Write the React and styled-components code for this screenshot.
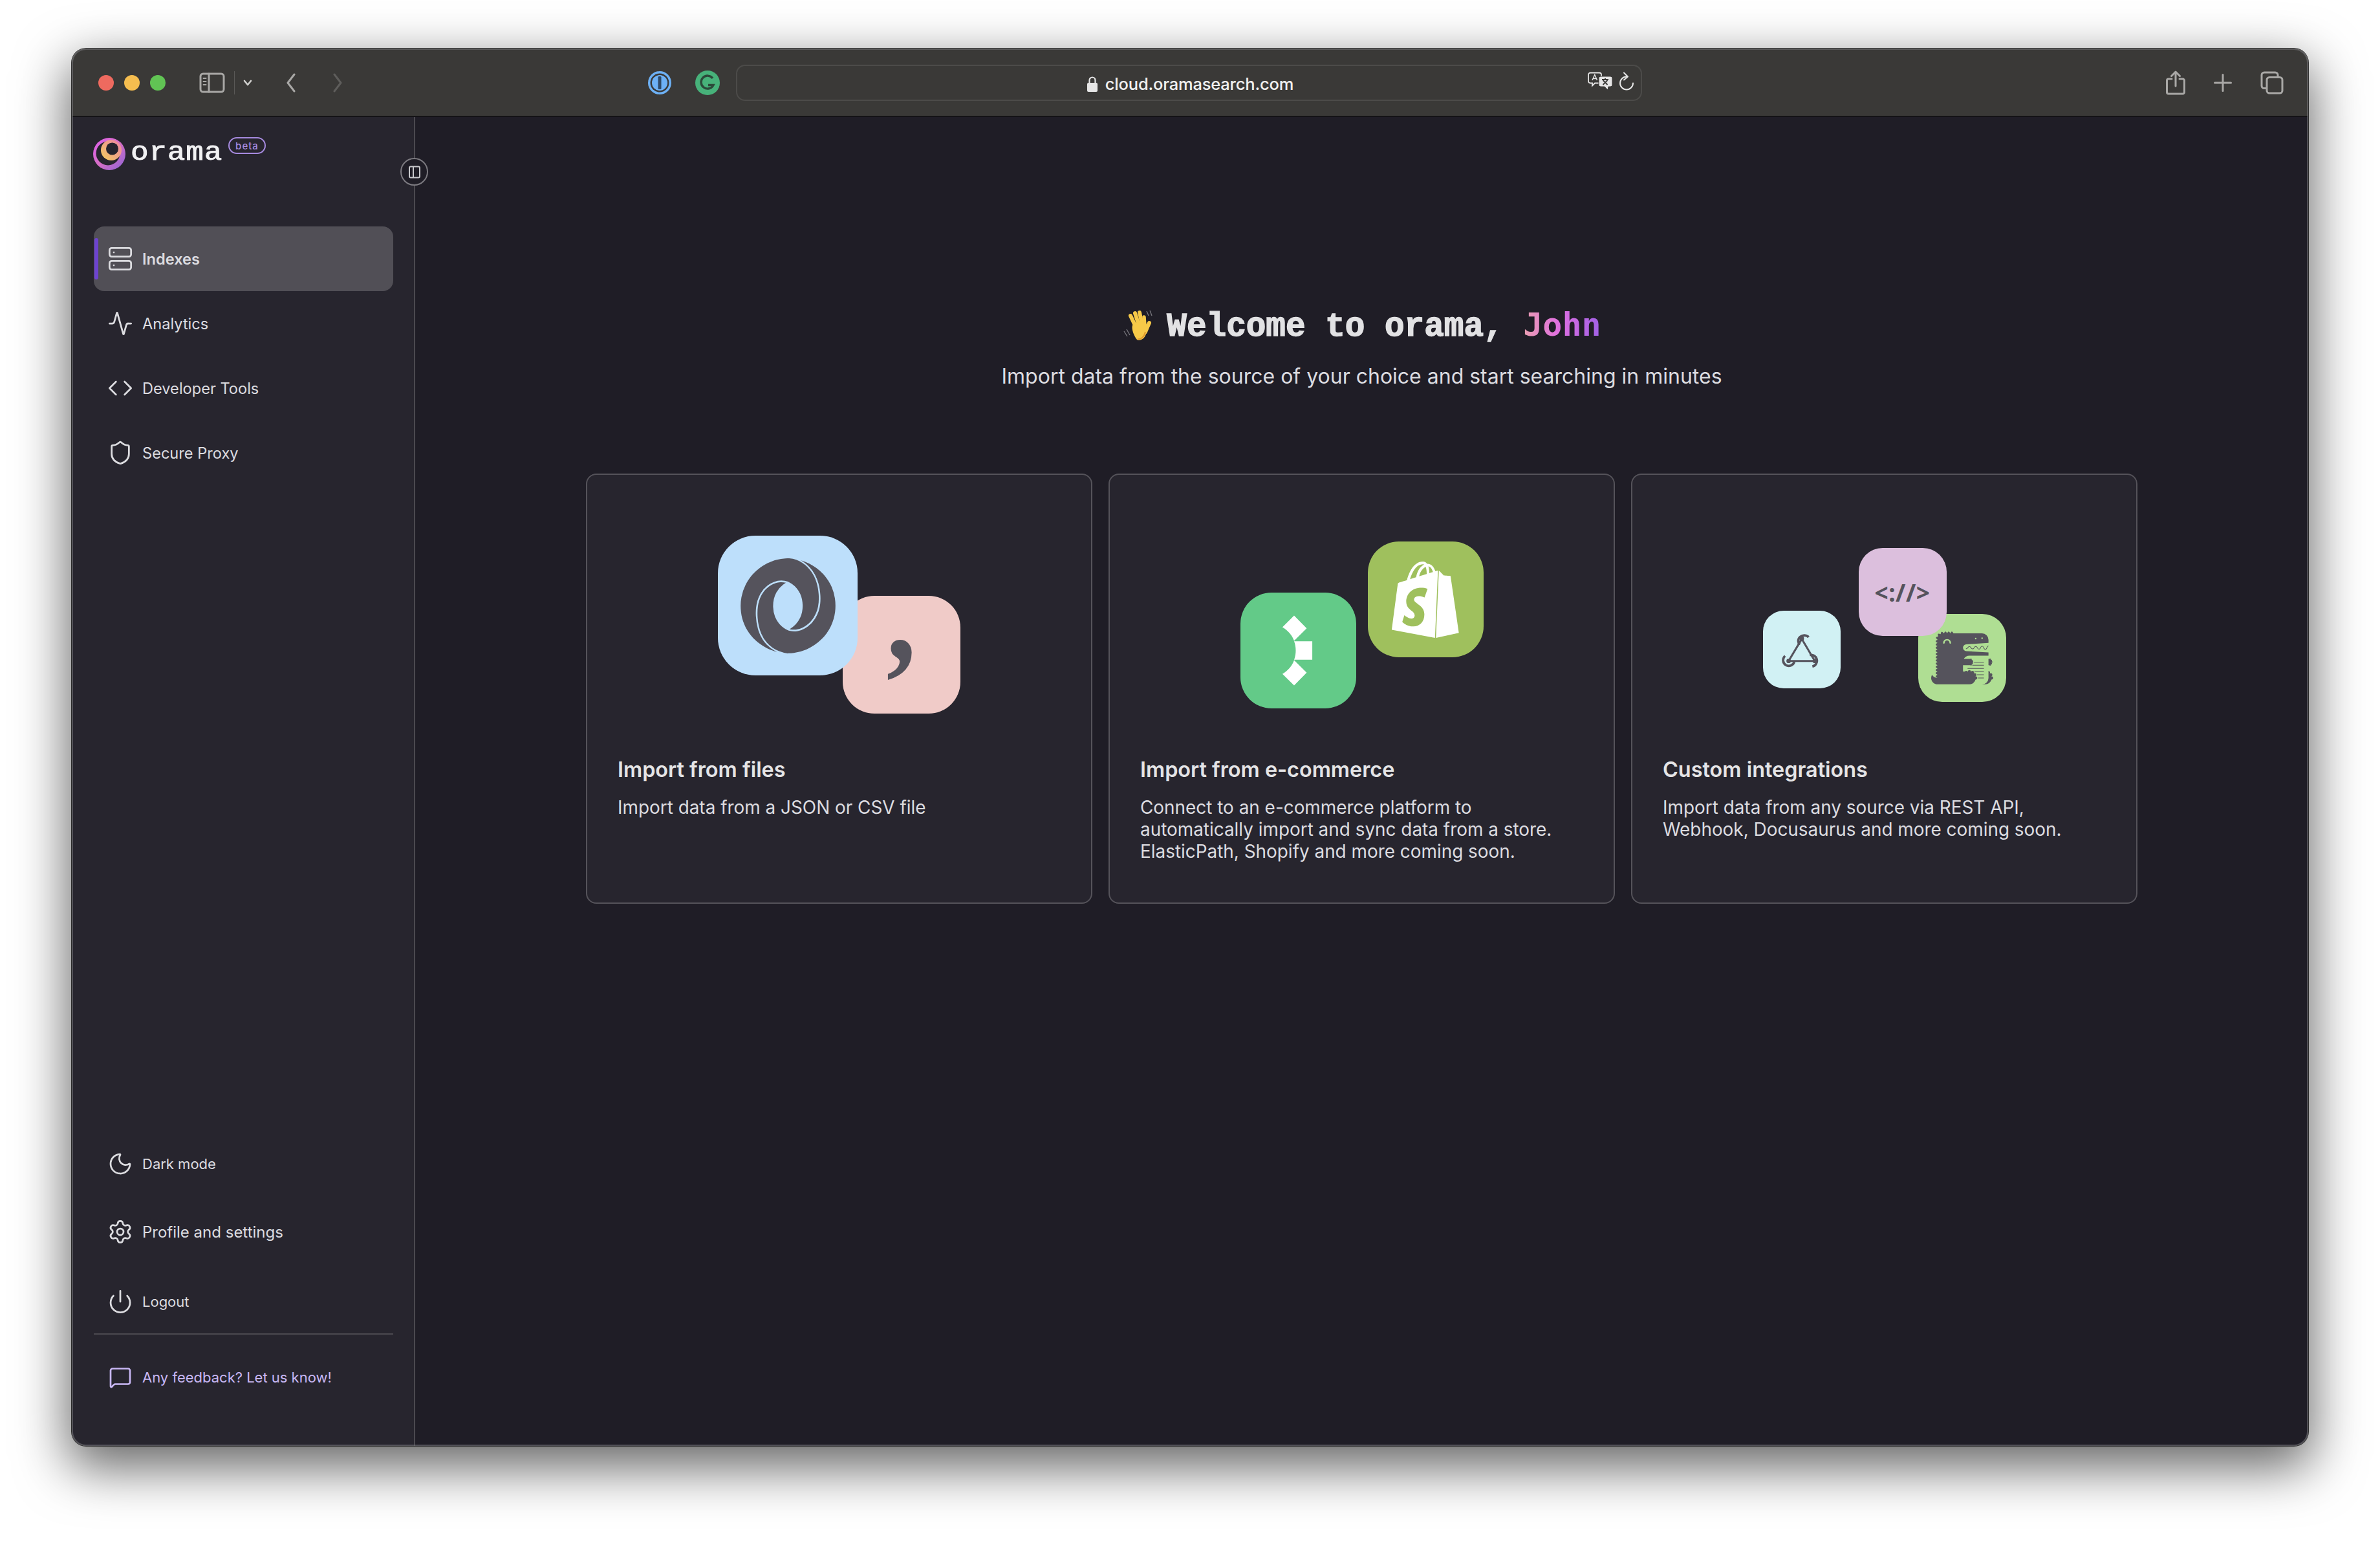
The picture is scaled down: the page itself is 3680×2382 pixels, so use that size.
import React from "react";
import styled, { createGlobalStyle } from "styled-components";
import { Server, Activity, Code, Shield, Moon, Settings, Power, MessageSquare } from "lucide-react";
import { SiJson, SiShopify, SiDocusaurus } from "react-icons/si";

const Global = createGlobalStyle`
  html, body { margin: 0; padding: 0; background: #fff; }
  * { box-sizing: border-box; }
  body { font-family: Inter, "Liberation Sans", sans-serif; }
`;

const Page = styled.div`
  width: 3680px; height: 2382px; padding: 75px 0 0 111px; overflow: hidden; background: #fff;
`;
const Win = styled.div`
  width: 3458px; height: 2160px; border-radius: 22px; overflow: hidden; display: flex; flex-direction: column;
  box-shadow: 0 28px 80px 6px rgba(0,0,0,.6), 0 0 0 1px rgba(0,0,0,.75);
  position: relative;
  &::after { content: ""; position: absolute; inset: 0; border-radius: 22px; pointer-events: none; box-shadow: inset 0 0 0 2px rgba(120,120,124,.55); }
`;
const TitleBar = styled.header`
  height: 106px; flex: none; background: #3a3937; border-bottom: 2px solid #141316; position: relative;
  display: flex; align-items: center; padding: 2px 0 0 41px;
`;
const Lights = styled.div`display: flex; gap: 16px; margin-right: 52px;`;
const Light = styled.span`width: 24px; height: 24px; border-radius: 50%; background: ${p => p.$c};`;
const BarIcon = styled.svg`flex: none; display: block; margin-left: ${p => p.$ml || 0}px;`;
const Divider = styled.span`width: 1px; height: 36px; background: #5a5957; margin-left: 14px;`;
const UrlBar = styled.div`
  width: 1401px; height: 56px; margin-left: 25px; border: 2px solid #4c4b49; border-radius: 14px; position: relative;
  display: flex; align-items: center; justify-content: center; gap: 11px;
  padding: 3px 0 0 3px; color: #f0f0f0; font-size: 25.5px; font-weight: 500; letter-spacing: -.2px;
`;
const UrlTools = styled.div`position: absolute; right: 10px; top: 9px; display: flex; align-items: center; gap: 8px;`;
const RightTools = styled.div`margin-left: auto; display: flex; align-items: center; gap: 44px; padding-right: 38px;`;

const Body = styled.div`flex: 1; display: flex; min-height: 0;`;
const Sidebar = styled.aside`
  width: 531px; flex: none; background: #27252e; border-right: 2px solid #4b4950; position: relative;
  display: flex; flex-direction: column; padding: 31px 32px 40px 34px;
`;
const LogoRow = styled.div`display: flex; align-items: flex-start; height: 138px; gap: 8px; margin-left: -1px;`;
const LogoText = styled.span`
  font-family: "Liberation Mono", monospace; font-size: 40px; letter-spacing: .7px; font-weight: 400; color: #f1f1f3;
  line-height: 44px; margin-top: 3px; width: 143px; display: block; transform: scaleX(1.15); transform-origin: left center;
  -webkit-text-stroke: .9px #f1f1f3;
`;
const Beta = styled.span`
  width: 58px; height: 26px; border: 2px solid #a78be0; border-radius: 13px; color: #a78be0; font-size: 15px; font-weight: 500;
  display: flex; align-items: center; justify-content: center; letter-spacing: 1px;
`;
const Collapse = styled.button`
  position: absolute; right: -22px; top: 63px; width: 43px; height: 43px; border-radius: 50%; padding: 0;
  background: #1f1d26; border: 2px solid #7c7a80; display: flex; align-items: center; justify-content: center;
`;
const Nav = styled.nav`display: flex; flex-direction: column;`;
const NavItem = styled.a`
  height: 100px; border-radius: 16px; display: flex; align-items: center; gap: 14px; padding-left: 21px; position: relative;
  font-size: 23.6px; color: #dcdce0; font-weight: ${p => p.$active ? 600 : 400};
  background: ${p => p.$active ? "#514f56" : "transparent"};
  &::before { content: ""; display: ${p => p.$active ? "block" : "none"}; position: absolute; left: 1px; top: 18px; bottom: 18px; width: 6px; border-radius: 3px; background: #6d43d0; }
`;
const Foot = styled.div`margin-top: auto; display: flex; flex-direction: column;`;
const FootItem = styled.a`
  height: ${p => p.$h}px; display: flex; align-items: center; gap: 14px; padding-left: 21px; color: #dcdce0; font-size: ${p => p.$fs}px;
`;
const FootRule = styled.div`height: 2px; background: #4b4950; flex: none;`;
const Feedback = styled.a`
  height: 132px; display: flex; align-items: center; gap: 16px; padding-left: 23px; color: #c9b8f5; font-size: 22px;
`;

const Main = styled.main`
  flex: 1; background: #1f1d26; display: flex; flex-direction: column; align-items: center; padding-top: 292px;
`;
const Heading = styled.h1`
  margin: 0; display: flex; align-items: center; gap: 21px; height: 60px;
  font-family: "Liberation Mono", monospace; font-size: 51px; font-weight: 700; color: #e2e2e4; white-space: pre;
  -webkit-text-stroke: 1.4px #e2e2e4;
`;
const Name = styled.span`
  font-family: "DejaVu Sans Mono", monospace; font-size: 50px; -webkit-text-stroke: 0;
  background: linear-gradient(90deg, #ea9fb0 0%, #e06fe0 45%, #9f60e6 100%);
  -webkit-background-clip: text; background-clip: text; color: transparent;
`;
const Sub = styled.p`
  margin: 29px 0 0; font-size: 32px; line-height: 40px; color: #dcdce0; font-weight: 400;
`;
const Cards = styled.section`display: grid; grid-template-columns: repeat(3, 783px); gap: 25px; margin-top: 130px;`;
const Card = styled.article`
  height: 665px; background: #27252e; border: 2px solid #55535a; border-radius: 16px; padding: 0 47px;
`;
const IconArea = styled.div`height: 434px; padding-top: ${p => p.$top}px; display: flex; justify-content: center;`;
const Cluster = styled.div`position: relative; width: ${p => p.$w}px; height: ${p => p.$h}px;`;
const Tile = styled.div`
  position: absolute; left: ${p => p.$x}px; top: ${p => p.$y}px; width: ${p => p.$s}px; height: ${p => p.$s}px;
  border-radius: ${p => Math.round(p.$s * 0.27)}px; background: ${p => p.$bg}; color: ${p => p.$fg || "#55535c"};
  display: flex; align-items: center; justify-content: center;
`;
const CommaGlyph = styled.span`
  font-family: "Liberation Serif", serif; font-weight: 700; font-size: 205px; line-height: 160px; color: #55535c; transform: translateY(-62px) scaleX(.9);
`;
const CodeGlyph = styled.span`
  font-family: "Noto Sans", sans-serif; font-weight: 700; font-size: 37px; letter-spacing: .5px; color: #55535c;
`;
const CardTitle = styled.h2`margin: 0; font-size: 32.4px; line-height: 44px; font-weight: 600; color: #e4e4e6;`;
const CardText = styled.p`margin: 19px 0 0; font-size: 27.9px; line-height: 34px; color: #dcdce0; font-weight: 400;`;

const stroke = { fill: "none", stroke: "#a9a8a6", strokeWidth: 3, strokeLinecap: "round", strokeLinejoin: "round" };

const SidebarGlyph = () => (
  <BarIcon width="40" height="32" viewBox="0 0 40 32" $ml={0}>
    <rect x="2" y="2" width="36" height="28" rx="4" {...stroke} />
    <path d="M15 2v28" {...stroke} />
    <path d="M6.5 9h4M6.5 14h4M6.5 19h4" {...stroke} strokeWidth="2" />
  </BarIcon>
);
const Chevron = () => (
  <BarIcon width="14" height="10" viewBox="0 0 14 10" $ml={13}>
    <path d="M2 2l5 6 5-6" fill="none" stroke="#d0d0ce" strokeWidth="2.6" strokeLinecap="round" strokeLinejoin="round" />
  </BarIcon>
);
const Arrow = ({ d, color, ml }) => (
  <BarIcon width="18" height="30" viewBox="0 0 18 30" $ml={ml}>
    <path d={d} fill="none" stroke={color} strokeWidth="3" strokeLinecap="round" strokeLinejoin="round" />
  </BarIcon>
);
const OnePassword = () => (
  <BarIcon width="38" height="38" viewBox="0 0 38 38" $ml={470}>
    <circle cx="19" cy="19" r="18" fill="#6db1f5" />
    <circle cx="19" cy="19" r="14.5" fill="#3a3937" />
    <circle cx="19" cy="19" r="12" fill="#6db1f5" />
    <rect x="16.5" y="9" width="5" height="20" rx="1.5" fill="#2f4a68" />
  </BarIcon>
);
const Grammarly = () => (
  <BarIcon width="38" height="38" viewBox="0 0 38 38" $ml={36}>
    <circle cx="19" cy="19" r="19" fill="#47b27a" />
    <path d="M27 12a10 10 0 1 0 1 10.5H20" fill="none" stroke="#2c4a3a" strokeWidth="3.4" />
  </BarIcon>
);
const LockIcon = () => (
  <BarIcon width="18" height="26" viewBox="0 0 18 26">
    <path d="M4.5 12V7a4.5 4.5 0 0 1 9 0v5" fill="none" stroke="#e6e6e6" strokeWidth="2.2" />
    <rect x="1" y="11" width="16" height="14" rx="2" fill="#e6e6e6" />
  </BarIcon>
);
const Translate = () => (
  <BarIcon width="40" height="30" viewBox="0 0 40 30">
    <path d="M4 1.5h14a3 3 0 0 1 3 3v10a3 3 0 0 1-3 3H11l-4 4v-4H4a3 3 0 0 1-3-3v-10a3 3 0 0 1 3-3z" fill="#3a3937" stroke="#e6e6e6" strokeWidth="1.8" />
    <path d="M7 13l3.8-8.5L14.5 13M8.4 10.4h5" fill="none" stroke="#e6e6e6" strokeWidth="1.5" />
    <path d="M20 7h15a3 3 0 0 1 3 3v10a3 3 0 0 1-3 3h-3l-1 5-5-5h-6a3 3 0 0 1-3-3V10a3 3 0 0 1 3-3z" fill="#e6e6e6" stroke="#3a3937" strokeWidth="1" />
    <path d="M22 12h10M27 10v2M23.5 20l7-7M30.5 20l-7-7" fill="none" stroke="#3a3937" strokeWidth="1.8" />
  </BarIcon>
);
const Reload = () => (
  <BarIcon width="24" height="30" viewBox="0 0 24 30">
    <path d="M12 7.5a10 10 0 1 0 10 10" fill="none" stroke="#e6e6e6" strokeWidth="2" strokeLinecap="round" />
    <path d="M8 1.5l6 6-6 5" fill="none" stroke="#e6e6e6" strokeWidth="2" strokeLinecap="round" strokeLinejoin="round" />
  </BarIcon>
);
const ShareIcon = () => (
  <BarIcon width="30" height="38" viewBox="0 0 30 38">
    <path d="M9 13H4a2.5 2.5 0 0 0-2.5 2.5v18A2.5 2.5 0 0 0 4 36h22a2.5 2.5 0 0 0 2.5-2.5v-18A2.5 2.5 0 0 0 26 13h-5" {...stroke} />
    <path d="M15 24V2M8.5 8.5L15 2l6.5 6.5" {...stroke} />
  </BarIcon>
);
const PlusIcon = () => (
  <BarIcon width="28" height="28" viewBox="0 0 28 28">
    <path d="M14 1.5v25M1.5 14h25" {...stroke} />
  </BarIcon>
);
const TabsIcon = () => (
  <BarIcon width="36" height="36" viewBox="0 0 36 36">
    <path d="M9 26.5H6a4 4 0 0 1-4-4V6a4 4 0 0 1 4-4h17a4 4 0 0 1 4 4v3" {...stroke} />
    <rect x="10" y="9.5" width="24" height="24.5" rx="4" {...stroke} />
  </BarIcon>
);
const OramaLogo = () => (
  <svg width="50" height="52" viewBox="0 0 50 52" style={{ flex: "none" }}>
    <defs>
      <linearGradient id="or1" x1="0" y1="0" x2="1" y2="1">
        <stop offset="0" stopColor="#e05ff0" /><stop offset=".5" stopColor="#d56ec4" /><stop offset="1" stopColor="#8c63d8" />
      </linearGradient>
      <linearGradient id="or2" x1="0" y1="1" x2="1" y2="0">
        <stop offset="0" stopColor="#f5cf5c" /><stop offset="1" stopColor="#ec80a8" />
      </linearGradient>
    </defs>
    <circle cx="25" cy="26" r="25" fill="url(#or1)" />
    <circle cx="23" cy="25" r="18.5" fill="#27252e" />
    <circle cx="28" cy="20" r="16" fill="url(#or2)" />
    <circle cx="29.5" cy="18" r="9.5" fill="#27252e" />
  </svg>
);
const CollapseGlyph = () => (
  <svg width="20" height="20" viewBox="0 0 20 20">
    <rect x="2" y="1.5" width="16" height="17" rx="2" fill="none" stroke="#c8c8cc" strokeWidth="2" />
    <path d="M8 1.5v17" stroke="#c8c8cc" strokeWidth="2" />
  </svg>
);
const WaveHand = () => (
  <svg width="48" height="48" viewBox="0 0 48 48" style={{ flex: "none" }}>
    <g stroke="#f7c948" strokeLinecap="round" fill="none">
      <path d="M21 26L13 9" strokeWidth="6" />
      <path d="M26 24L20 5" strokeWidth="6" />
      <path d="M31 23L27 4" strokeWidth="6" />
      <path d="M35 25L34 11" strokeWidth="5.5" />
      <path d="M36 34L42 20" strokeWidth="6" />
    </g>
    <path d="M16 24c4-6 20-8 22-1 2 8-1 17-5 21-4 3-8 4-10 2-3-3-9-15-7-22z" fill="#f7c948" />
    <path d="M24 45c5 1 10-3 12-11" stroke="#e09b2d" strokeWidth="2" fill="none" />
    <path d="M7 30l5 9M3 33l5 8M38 2l3 7M43 1l3 8" stroke="#77767c" strokeWidth="1.4" fill="none" />
  </svg>
);
const ElasticPath = () => (
  <svg width="179" height="179" viewBox="112 348 535 535">
    <path d="M360 454l58 59-58 58c-9-26-28-47-54-63z" fill="#fff" />
    <path d="M360 573h84v85h-84c10-26 10-59 0-85z" fill="#fff" />
    <path d="M360 660l58 58-58 59-54-53c26-16 45-38 54-64z" fill="#fff" />
  </svg>
);
const Webhook = () => (
  <svg width="64" height="58" viewBox="222 498 188 170" fill="none" stroke="#55535c" strokeLinecap="butt">
    <path d="M316 535L256 635M316 535L375 635M256 635H375" strokeWidth="9" />
    <path d="M347 527a27 25 0 1 0-40 34" strokeWidth="11" />
    <path d="M240 612a26 26 0 1 0 42 27" strokeWidth="11" />
    <path d="M352 608a26 26 0 1 1 12 52" strokeWidth="11" />
    <g fill="#55535c" stroke="none">
      <circle cx="316" cy="533" r="10" /><circle cx="256" cy="635" r="10" /><circle cx="375" cy="635" r="10" />
    </g>
  </svg>
);

const SIDE_ICON = { strokeWidth: 1.65, size: 40 };

export default function App() {
  return (
    <Page>
      <Global />
      <Win>
        <TitleBar>
          <Lights>
            <Light $c="#ee6a5f" /><Light $c="#f5bd4f" /><Light $c="#61c454" />
          </Lights>
          <SidebarGlyph />
          <Divider />
          <Chevron />
          <Arrow d="M14 2L4 15l10 13" color="#a9a8a6" ml={51} />
          <Arrow d="M4 2l10 13L4 28" color="#5e5d5b" ml={54} />
          <OnePassword />
          <Grammarly />
          <UrlBar>
            <LockIcon />
            <span>cloud.oramasearch.com</span>
            <UrlTools><Translate /><Reload /></UrlTools>
          </UrlBar>
          <RightTools>
            <ShareIcon /><PlusIcon /><TabsIcon />
          </RightTools>
        </TitleBar>
        <Body>
          <Sidebar>
            <LogoRow>
              <OramaLogo />
              <LogoText>orama</LogoText>
              <Beta>beta</Beta>
            </LogoRow>
            <Collapse><CollapseGlyph /></Collapse>
            <Nav>
              <NavItem $active><Server {...SIDE_ICON} />Indexes</NavItem>
              <NavItem><Activity {...SIDE_ICON} />Analytics</NavItem>
              <NavItem><Code {...SIDE_ICON} />Developer Tools</NavItem>
              <NavItem><Shield {...SIDE_ICON} />Secure Proxy</NavItem>
            </Nav>
            <Foot>
              <FootItem $h={92} $fs={22}><Moon {...SIDE_ICON} />Dark mode</FootItem>
              <FootItem $h={118} $fs={24}><Settings {...SIDE_ICON} />Profile and settings</FootItem>
              <FootItem $h={98} $fs={22}><Power {...SIDE_ICON} />Logout</FootItem>
              <FootRule />
              <Feedback><MessageSquare strokeWidth={1.8} size={36} />Any feedback? Let us know!</Feedback>
            </Foot>
          </Sidebar>
          <Main>
            <Heading>
              <WaveHand />
              <span>Welcome to orama, <Name>John</Name></span>
            </Heading>
            <Sub>Import data from the source of your choice and start searching in minutes</Sub>
            <Cards>
              <Card>
                <IconArea $top={94}>
                  <Cluster $w={375} $h={275}>
                    <Tile $x={193} $y={93} $s={182} $bg="#f0cbc8"><CommaGlyph>,</CommaGlyph></Tile>
                    <Tile $x={0} $y={0} $s={216} $bg="#bddffb"><SiJson size={147} /></Tile>
                  </Cluster>
                </IconArea>
                <CardTitle>Import from files</CardTitle>
                <CardText>Import data from a JSON or CSV file</CardText>
              </Card>
              <Card>
                <IconArea $top={103}>
                  <Cluster $w={376} $h={258}>
                    <Tile $x={0} $y={79} $s={179} $bg="#63ca88"><ElasticPath /></Tile>
                    <Tile $x={197} $y={0} $s={179} $bg="#9fc05d" $fg="#fff"><SiShopify size={118} /></Tile>
                  </Cluster>
                </IconArea>
                <CardTitle>Import from e-commerce</CardTitle>
                <CardText>Connect to an e-commerce platform to<br />automatically import and sync data from a store.<br />ElasticPath, Shopify and more coming soon.</CardText>
              </Card>
              <Card>
                <IconArea $top={113}>
                  <Cluster $w={376} $h={238}>
                    <Tile $x={0} $y={97} $s={120} $bg="#d1f1f4"><Webhook /></Tile>
                    <Tile $x={240} $y={102} $s={136} $bg="#afde93"><SiDocusaurus size={96} /></Tile>
                    <Tile $x={148} $y={0} $s={136} $bg="#dcbfdd"><CodeGlyph>{"<://>"}</CodeGlyph></Tile>
                  </Cluster>
                </IconArea>
                <CardTitle>Custom integrations</CardTitle>
                <CardText>Import data from any source via REST API,<br />Webhook, Docusaurus and more coming soon.</CardText>
              </Card>
            </Cards>
          </Main>
        </Body>
      </Win>
    </Page>
  );
}
